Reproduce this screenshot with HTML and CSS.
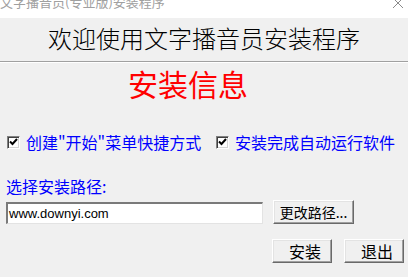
FILE: index.html
```html
<!DOCTYPE html>
<html lang="zh-CN">
<head>
<meta charset="utf-8">
<title>文字播音员(专业版)安装程序</title>
<link rel="stylesheet" href="styles.css">
</head>
<body>
<div class="window">
  <div class="titlebar">
    <span class="title-text">文字播音员(专业版)安装程序</span>
    <svg class="close" width="12" height="12" viewBox="0 0 12 12"><path d="M1 1 L11 11 M11 1 L1 11" stroke="#8a8a8a" stroke-width="1" fill="none"/></svg>
  </div>
  <div class="header">欢迎使用文字播音员安装程序</div>
  <div class="separator"></div>
  <div class="subtitle">安装信息</div>
  <div class="options">
    <label class="option">
      <span class="checkbox"><svg width="9" height="8" viewBox="0 0 9 8"><path d="M1 3.5 L3.5 6 L8 1" stroke="#000" stroke-width="2" fill="none"/></svg></span>
      <span class="option-text">创建"开始"菜单快捷方式</span>
    </label>
    <label class="option">
      <span class="checkbox"><svg width="9" height="8" viewBox="0 0 9 8"><path d="M1 3.5 L3.5 6 L8 1" stroke="#000" stroke-width="2" fill="none"/></svg></span>
      <span class="option-text">安装完成自动运行软件</span>
    </label>
  </div>
  <div class="path-label">选择安装路径:</div>
  <div class="path-row">
    <div class="path-input">www.downyi.com</div>
    <div class="btn btn-path">更改路径...</div>
  </div>
  <div class="actions">
    <div class="btn btn-action">安装</div>
    <div class="btn btn-action">退出</div>
  </div>
</div>
</body>
</html>
```

FILE: styles.css
```css
html, body {
  margin: 0;
  padding: 0;
}
body {
  width: 408px;
  height: 277px;
  overflow: hidden;
  background: #f0f0f0;
  font-family: "Noto Sans CJK SC", "Liberation Sans", sans-serif;
}
.window {
  width: 408px;
  height: 277px;
  display: flex;
  flex-direction: column;
}
.titlebar {
  height: 18px;
  background: #ffffff;
  display: flex;
  justify-content: space-between;
  align-items: flex-start;
  overflow: hidden;
  flex: none;
}
.title-text {
  font-size: 13px;
  line-height: 13px;
  color: #a0a0a0;
  margin-top: -5px;
  white-space: nowrap;
}
.close {
  margin-top: -3px;
  margin-right: 4px;
}
.header {
  font-size: 24px;
  line-height: 24px;
  color: #000;
  text-align: center;
  padding-top: 8px;
  padding-bottom: 11px;
  font-weight: 300;
}
.separator {
  height: 1px;
  background: #a0a0a0;
  border-bottom: 1px solid #ffffff;
}
.subtitle {
  font-size: 30px;
  line-height: 30px;
  color: #ff0000;
  padding-left: 128px;
  margin-top: 5px;
}
.options {
  display: grid;
  grid-template-columns: 209px auto;
  padding-left: 7px;
  margin-top: 36px;
}
.option {
  display: flex;
  align-items: center;
  gap: 6px;
}
.checkbox {
  width: 11px;
  height: 11px;
  background: #fff;
  border: 1px solid;
  border-color: #808080 #ffffff #ffffff #808080;
  box-shadow: inset 1px 1px #404040, inset -1px -1px #d4d4d4;
  display: flex;
  align-items: center;
  justify-content: center;
  flex: none;
}
.option-text, .path-label {
  font-size: 16px;
  line-height: 16px;
  color: #0000ff;
  white-space: nowrap;
}
.path-label {
  padding-left: 6px;
  margin-top: 28px;
}
.path-row {
  display: flex;
  align-items: flex-end;
  gap: 10px;
  padding-left: 6px;
  margin-top: 6px;
}
.path-input {
  width: 253px;
  height: 19px;
  background: #fff;
  border-style: solid;
  border-width: 2px 1px 1px 2px;
  border-color: #7a7a7a #e3e3e3 #e3e3e3 #7a7a7a;
  font-family: "Liberation Sans", Arial, sans-serif;
  font-size: 13px;
  line-height: 19px;
  padding-left: 1px;
  box-sizing: content-box;
}
.btn {
  background: #f0f0f0;
  border: 1px solid;
  border-color: #ffffff #696969 #696969 #ffffff;
  box-shadow: inset -1px -1px #a0a0a0, inset 1px 1px #e3e3e3;
  display: flex;
  align-items: center;
  justify-content: center;
  color: #000;
  box-sizing: border-box;
  white-space: nowrap;
}
.btn-path {
  width: 81px;
  height: 24px;
  font-size: 14px;
}
.actions {
  display: flex;
  justify-content: flex-end;
  gap: 12px;
  padding-right: 4px;
  margin-top: 15px;
}
.btn-action {
  width: 60px;
  height: 24px;
  font-size: 16px;
  padding-left: 6px;
}
```
